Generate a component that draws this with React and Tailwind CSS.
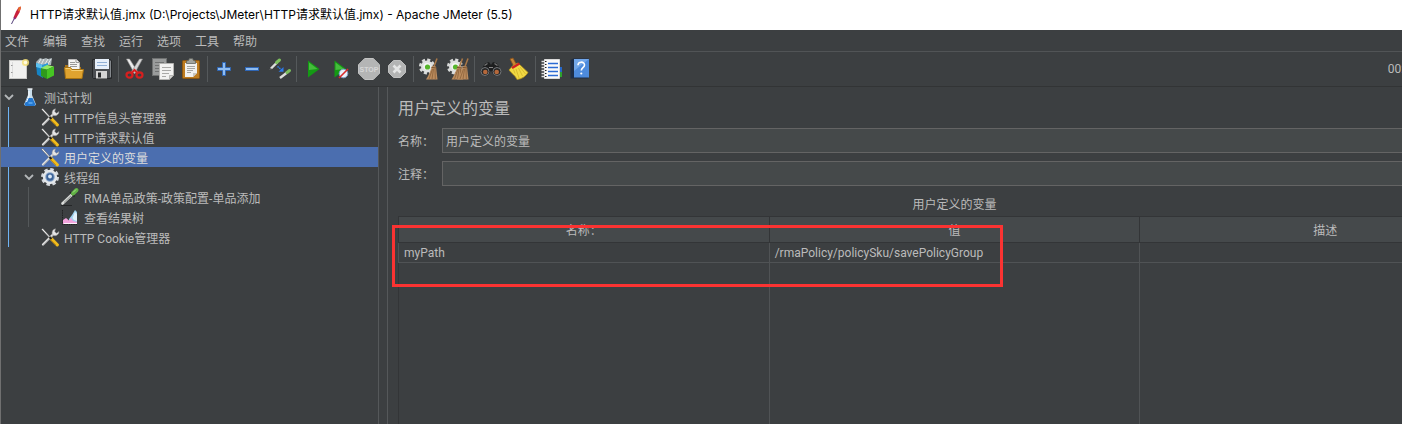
import React from "react";

const Svg = ({ children, size = 24 }) => (
  <svg width={size} height={size} viewBox={`0 0 ${size} ${size}`} fill="none" aria-hidden="true" className="shrink-0">
    {children}
  </svg>
);

const NewIcon = () => (
  <Svg>
    <rect x="3.5" y="3.5" width="17" height="18" fill="#f1f1f0" stroke="#c9c9c7" />
    <path d="M6.5 5v15" stroke="#dcdcdc" />
    <path d="M5 8.500h1.500M5 15.500h1.500" stroke="#999" />
    <circle cx="19.500" cy="5.500" r="3.600" fill="#f6e27a" opacity=".85" />
    <circle cx="19.500" cy="5.500" r="1.800" fill="#fffbe0" />
  </Svg>
);

const TemplatesIcon = () => (
  <Svg>
    <path d="M2 5l4-4 3 1 3-1 2 1 4-1-1 7H3z" fill="#aab4b8" />
    <path d="M4 7l3-5M7 8l3-6M11 7l3-5M14 7l3-5" stroke="#e6eaec" />
    <path d="M2 6l7 2v13l-6-3.500z" fill="#1583c4" />
    <path d="M2 6l7 2v4l-7-2z" fill="#5cc0ee" />
    <path d="M8 8l6-2v4l-6 4z" fill="#2b9ad8" />
    <path d="M7 11l6 1.500V22l-6-3z" fill="#2f9a1c" />
    <path d="M7 11l6-3 7 1.500-7 3z" fill="#93ea62" />
    <path d="M13 12.500l7-3v9L13 22z" fill="#46c523" />
  </Svg>
);

const OpenIcon = () => (
  <Svg>
    <path d="M3 8h6l1 2h9v8H3z" fill="#a8741a" />
    <path d="M6.500 13V2.500h8l3 3V13z" fill="#f4f4f4" stroke="#b9b9b9" />
    <path d="M8 5.500h5M8 7.500h7M8 9.500h7" stroke="#999" />
    <path d="M14 2.500v3h3.500" stroke="#999" />
    <path d="M2.500 10.500h6l1.500 2h11.500L20 21.500H3.500z" fill="#dfa32f" stroke="#a97412" />
    <path d="M3.500 11.500h4.500l1.500 2h11" stroke="#f3cd72" />
  </Svg>
);

const SaveIcon = () => (
  <Svg>
    <path d="M2.500 2.500h18l1 1v18h-18l-1-1z" fill="#4b4e52" stroke="#26282a" />
    <rect x="5" y="2" width="14" height="10" fill="#e6effa" />
    <path d="M7 5.500h10M7 8.500h10" stroke="#91b0d6" />
    <rect x="6" y="14" width="11" height="7.500" fill="#d5d5d5" />
    <rect x="8" y="15.500" width="3" height="5" fill="#26282a" />
    <path d="M20.500 4v16" stroke="#85898d" />
  </Svg>
);

const CutIcon = () => (
  <Svg>
    <path d="M3.500 2l3 0 8 12.500-3 2z" fill="#ececec" stroke="#999" strokeWidth=".6" />
    <path d="M19.500 2l-3 0-8 12.500 3 2z" fill="#d6d6d6" stroke="#8c8c8c" strokeWidth=".6" />
    <ellipse cx="6.500" cy="18" rx="3" ry="2.600" stroke="#d61f1f" strokeWidth="2.200" />
    <ellipse cx="16.500" cy="18" rx="3" ry="2.600" stroke="#d61f1f" strokeWidth="2.200" />
    <path d="M8.500 16l3-3 3 3" stroke="#d61f1f" strokeWidth="2" />
  </Svg>
);

const CopyIcon = () => (
  <Svg>
    <rect x="1.500" y="1.500" width="14" height="17" fill="#9a9c9c" stroke="#6f7171" />
    <path d="M4 5.500h9M4 8.500h5M4 11.500h4M4 14.500h4" stroke="#717373" />
    <path d="M8.500 6.500h14v12l-4 4h-10z" fill="#f2f2f1" stroke="#b4b4b2" />
    <path d="M11 10.500h9M11 13.500h9M11 16.500h7M11 19.500h4" stroke="#a9a9a7" />
    <path d="M18.500 22.500v-4h4z" fill="#d2d2d0" stroke="#a3a3a1" strokeWidth=".7" />
  </Svg>
);

const PasteIcon = () => (
  <Svg>
    <rect x="3.500" y="3.500" width="17" height="18" rx="1" fill="#bd7c20" stroke="#8b5611" />
    <path d="M6 6h12v10l-4 4H6z" fill="#f1f1ef" />
    <path d="M8 9.500h8M8 11.500h8M8 13.500h6M8 15.500h4" stroke="#a5a5a2" />
    <path d="M14 20v-4h4z" fill="#c6c6c2" />
    <path d="M7.500 6.500V4l2-.5 1-2h3l1 2 2 .5v2.500z" fill="#a3a59f" stroke="#62645f" strokeWidth=".8" />
  </Svg>
);

const PlusIcon = () => (
  <Svg>
    <path d="M10.500 5.500h3v5h5v3h-5v5h-3v-5h-5v-3h5z" fill="#8ebcf0" stroke="#2f66b5" />
  </Svg>
);

const MinusIcon = () => (
  <Svg>
    <rect x="5.500" y="10.500" width="13" height="3" fill="#8ebcf0" stroke="#2f66b5" />
  </Svg>
);

const ToggleIcon = () => (
  <Svg>
    <path d="M3 11.500l6-6" stroke="#dcdedc" strokeWidth="2.400" />
    <path d="M8.500 5.500l3-2.500" stroke="#7cbf5d" strokeWidth="3" strokeLinecap="round" />
    <path d="M2 12.500l1.500-1.500" stroke="#888" />
    <path d="M12 21l6.500-5" stroke="#dcdedc" strokeWidth="2.400" />
    <path d="M19 15.500l2.500-2" stroke="#7cbf5d" strokeWidth="3" strokeLinecap="round" />
    <path d="M9.500 9.500l4.500 3.500" stroke="#2c7bea" strokeWidth="1.400" strokeDasharray="1.500 .7" />
    <path d="M15.500 10v4.800h-5z" fill="#2c7bea" />
  </Svg>
);

const PlayIcon = () => (
  <Svg>
    <path d="M7 3.500L18.500 12 7 20.500z" fill="#149a14" />
    <path d="M8 5.500L16.500 12 8 13z" fill="#45bd3c" />
  </Svg>
);

const PlayNoPauseIcon = () => (
  <Svg>
    <path d="M5.500 3.500L17 12 5.500 20.500z" fill="#149a14" />
    <path d="M6.500 5.500L15 12l-8.500 1z" fill="#45bd3c" />
    <circle cx="14.500" cy="16.500" r="4.300" fill="#e9f0fa" stroke="#7f9fc6" />
    <path d="M10 21l9-9" stroke="#d92b2b" strokeWidth="1.600" />
  </Svg>
);

const StopIcon = () => (
  <Svg>
    <path d="M7.700 1.500h8.600l6.200 6.200v8.600l-6.200 6.200H7.700l-6.200-6.200V7.700z" fill="#b4b5b5" stroke="#c2c3c3" />
    <text x="12" y="15" textAnchor="middle" fontSize="7" fontFamily="Liberation Sans, sans-serif" fontWeight="700" fill="#d6d7d7">
      STOP
    </text>
  </Svg>
);

const ShutdownIcon = () => (
  <Svg>
    <path d="M8.500 3.500h7l5 5v7l-5 5h-7l-5-5v-7z" fill="#b3b4b4" stroke="#c0c1c1" />
    <path d="M8.500 8.500l7 7M15.500 8.500l-7 7" stroke="#e4e5e5" strokeWidth="2.600" />
  </Svg>
);

const Gear = () => (
  <>
    <circle cx="9" cy="9.500" r="6.700" stroke="#d9dbda" strokeWidth="2.600" strokeDasharray="3.100 2.160" />
    <circle cx="9" cy="9.500" r="6" fill="#dfe1e0" />
    <circle cx="9" cy="9.500" r="3.600" fill="#f4f5f4" />
    <circle cx="9.500" cy="10" r="2.600" fill="#55b52b" />
  </>
);

const SmallBroom = ({ x }) => (
  <g transform={`translate(${x} 0)`}>
    <path d="M17.500 1.500l-3 8" stroke="#a97847" strokeWidth="1.600" />
    <path d="M12.500 9l4 .5 1.500 13H6.500c2.500-4 4.500-8 6-13.500z" fill="#bb8c5e" />
    <path d="M13 12L9.500 22M14 12l-1.500 10M15.500 12l.3 10" stroke="#8c6139" strokeWidth=".8" />
    <path d="M12 10.500l5 .5" stroke="#76502c" />
  </g>
);

const ClearIcon = () => (
  <Svg>
    <Gear />
    <SmallBroom x={1.5} />
  </Svg>
);

const ClearAllIcon = () => (
  <Svg>
    <Gear />
    <SmallBroom x={-1} />
    <SmallBroom x={4.5} />
  </Svg>
);

const SearchIcon = () => (
  <Svg>
    <path d="M6 6.500L10 5l2 3 2-3 4 1.500 4 7-3 5h-4l-3-5-3 5H5l-3.500-5z" fill="#1d1e1f" />
    <path d="M5.500 8.500l3-2M18.500 8.500l-3-2" stroke="#777" strokeWidth="1.300" />
    <circle cx="6" cy="14.500" r="4" fill="#252627" stroke="#74777a" />
    <circle cx="18" cy="14.500" r="4" fill="#252627" stroke="#74777a" />
    <circle cx="6.300" cy="15" r="2.300" fill="#b5683b" />
    <circle cx="17.700" cy="15" r="2.300" fill="#b5683b" />
    <path d="M10 10.500h4" stroke="#888" />
  </Svg>
);

const BroomIcon = () => (
  <Svg>
    <path d="M3 2l3-1L9.500 7.500 6.500 9z" fill="#c98538" stroke="#85501a" strokeWidth=".8" />
    <path d="M6 8.500L11 6l10 9.500c-2.500 4-6 6.500-11 7C8.500 18.500 4 16 2 13z" fill="#f1d943" stroke="#b7941a" strokeWidth=".8" />
    <path d="M9 12l3 9M11.500 11l4 8M13 10l5.500 7M6.500 12.500l1.500 4" stroke="#d3b42a" strokeWidth=".8" />
    <path d="M5 11l7.500-4.500" stroke="#d12222" strokeWidth="2.500" />
  </Svg>
);

const LogIcon = () => (
  <Svg>
    <path d="M19 10h3v5h-3z" fill="#2567c9" />
    <path d="M19 15h3v5h-3z" fill="#2da22d" />
    <path d="M4.500 2.500h15v19h-15z" fill="#fafafa" stroke="#dadada" />
    <path d="M8 6.500h10M8 10.500h10M8 14.500h10M8 18.500h10" stroke="#2c6bd4" strokeWidth="1.300" />
    <path d="M1.500 4.500h4M1.500 7.500h4M1.500 10.500h4M1.500 13.500h4M1.500 16.500h4M1.500 19.500h4" stroke="#e4e4e4" strokeWidth="1.400" />
    <path d="M5 4.500h1.500M5 7.500h1.500M5 10.500h1.500M5 13.500h1.500M5 16.500h1.500M5 19.500h1.500" stroke="#222" />
  </Svg>
);

const HelpIcon = () => (
  <Svg>
    <path d="M2.500 3l3-1.500h15v20h-18z" fill="#1d2d47" />
    <rect x="6" y="2" width="15" height="18.500" fill="#4d8bdd" />
    <path d="M6 2h15L6 14z" fill="#72a7ea" />
    <path d="M10 8.300c0-4.200 6.500-4 6.500-.4 0 2.800-3.200 2.700-3.200 5.600" stroke="#fff" strokeWidth="1.600" />
    <circle cx="13.300" cy="16.500" r="1.100" fill="#fff" />
  </Svg>
);

const FeatherIcon = () => (
  <Svg size={20}>
    <path d="M12.500 2.500l2-1 .5 1-1.500 5-3.500 6-2 .5-.5-1.500 2.500-6z" fill="#c9203c" />
    <path d="M12.500 2.500l2-1 .5 1-1 3-2 1z" fill="#e8702a" />
    <path d="M8 12l2 1-1 1.500-1.500-.5z" fill="#7a2a86" />
    <path d="M8 14l-2.500 5" stroke="#54407a" />
  </Svg>
);

const FlaskIcon = () => (
  <Svg size={20}>
    <path d="M8 2h4v6l4 9.500-1.500 1.500h-9L4 17.500 8 8z" fill="#c9ddea" />
    <path d="M7.500 11h5l3 6.500-1 1.500h-9L4.500 17.500z" fill="#2478d0" />
    <path d="M7.500 2h5" stroke="#e8eef2" strokeWidth="1.500" />
    <path d="M9 4v5l-2.500 6" stroke="#fff" />
    <path d="M8.500 16h4" stroke="#63aef0" strokeWidth="1.500" />
  </Svg>
);

const ToolsIcon = () => (
  <Svg size={20}>
    <path d="M3 17.500L14 6.500" stroke="#e4e4e4" strokeWidth="2.200" strokeLinecap="round" />
    <path d="M3.500 18L13.500 8" stroke="#8b8d8e" strokeWidth=".8" />
    <path d="M15.500 1.800a4 4 0 0 0-3.300 5l1.600 1.700a4 4 0 0 0 5.200-4l-2.500 1.700-1.800-1.600z" fill="#e5e5e5" stroke="#8c8c8c" strokeWidth=".5" />
    <path d="M1.500 2.500l1.300-1 8 9-1 .8z" fill="#f0f0f0" stroke="#555" strokeWidth=".5" />
    <path d="M11.500 12l5.800 5.800" stroke="#f0bc1c" strokeWidth="3.200" strokeLinecap="round" />
    <path d="M11 13l5 5" stroke="#c58a0d" strokeWidth=".9" />
    <path d="M9.500 10l2 2" stroke="#222" strokeWidth="2" />
  </Svg>
);

const CogIcon = () => (
  <Svg size={20}>
    <circle cx="10" cy="10" r="7.500" stroke="#d5d9de" strokeWidth="3" strokeDasharray="3.400 2.490" />
    <circle cx="10" cy="10" r="6" fill="#8aa6c9" stroke="#e4e7ea" strokeWidth="2.400" />
    <circle cx="10" cy="10" r="3.700" fill="#3c6398" />
    <circle cx="10" cy="9.500" r="1.900" fill="#dbe8f6" />
  </Svg>
);

const DropperIcon = () => (
  <Svg size={20}>
    <path d="M1 18.500h11" stroke="#242627" />
    <path d="M2.500 16.500L12 7.500" stroke="#d9dbd9" strokeWidth="2.600" strokeLinecap="round" />
    <path d="M4 15.500l7-6.700" stroke="#8c908c" />
    <path d="M10 5l4.500 4.500" stroke="#222" strokeWidth="1.600" />
    <path d="M13 6.500L16.500 3" stroke="#61b245" strokeWidth="4" strokeLinecap="round" />
    <path d="M13 5.500L16 2.500" stroke="#a9df8e" />
  </Svg>
);

const ResultsIcon = () => (
  <Svg size={20}>
    <path d="M9 12l3-4 3-5 2 2v12H9z" fill="#9fd0ef" />
    <path d="M3 17v-4l3-2 3 2.500 2-2.500 2 3 4 1v2z" fill="#f2a3dc" />
    <path d="M12.500 11l2.500-6 2 2v7l-3-1z" fill="#e3f1fb" />
    <path d="M2.500 3v14.500H17" stroke="#202122" strokeDasharray="1.500 .8" />
    <path d="M4 16.500h13" stroke="#fdf1fa" />
  </Svg>
);

const Chevron = () => (
  <Svg size={16}>
    <path d="M4 6l4 4 4-4" stroke="#b4b7b9" strokeWidth="1.800" />
  </Svg>
);

const menus = ["文件", "编辑", "查找", "运行", "选项", "工具", "帮助"];

const tools = [
  [["新建", NewIcon], ["模板", TemplatesIcon], ["打开", OpenIcon], ["保存", SaveIcon]],
  [["剪切", CutIcon], ["复制", CopyIcon], ["粘贴", PasteIcon]],
  [["展开", PlusIcon], ["折叠", MinusIcon], ["切换", ToggleIcon]],
  [["启动", PlayIcon], ["不停顿开始", PlayNoPauseIcon], ["停止", StopIcon], ["关闭", ShutdownIcon]],
  [["清除", ClearIcon], ["清除全部", ClearAllIcon]],
  [["搜索", SearchIcon], ["重置搜索", BroomIcon]],
  [["函数助手", LogIcon], ["帮助", HelpIcon]],
];

const tree = {
  label: "测试计划",
  Icon: FlaskIcon,
  children: [
    { label: "HTTP信息头管理器", Icon: ToolsIcon },
    { label: "HTTP请求默认值", Icon: ToolsIcon },
    { label: "用户定义的变量", Icon: ToolsIcon, selected: true },
    {
      label: "线程组",
      Icon: CogIcon,
      children: [
        { label: "RMA单品政策-政策配置-单品添加", Icon: DropperIcon },
        { label: "查看结果树", Icon: ResultsIcon },
      ],
    },
    { label: "HTTP Cookie管理器", Icon: ToolsIcon },
  ],
};

const indents = ["pl-0", "pl-5", "pl-10"];
const guides = ["left-[7px] bg-[#6fb4f5]", "left-[27px] bg-[#54585a]"];

function TreeNode({ node, level = 0 }) {
  const { label, Icon, children, selected } = node;
  return (
    <li role="treeitem" aria-selected={!!selected} aria-expanded={children ? true : undefined}>
      <button
        type="button"
        className={`relative flex h-5 w-full items-center whitespace-nowrap text-left ${indents[level]} ${
          selected ? "bg-[#4b6eaf] text-[#dddddd]" : ""
        }`}
      >
        <span className="mr-[3px] w-4 shrink-0">{children && <Chevron />}</span>
        <Icon />
        <span className="ml-1 pt-[3px]">{label}</span>
      </button>
      {children && (
        <ul role="group" className="relative">
          <span className={`absolute inset-y-0 w-px ${guides[level]}`} />
          {children.map((child) => (
            <TreeNode key={child.label} node={child} level={level + 1} />
          ))}
        </ul>
      )}
    </li>
  );
}

function Field({ id, label, value }) {
  return (
    <div className="flex items-center">
      <label htmlFor={id} className="w-11 shrink-0 pt-0.5">
        {label}
      </label>
      <input
        id={id}
        defaultValue={value}
        className="h-[25px] min-w-0 flex-1 border border-[#646464] bg-[#45494a] px-[3px] outline-none"
      />
    </div>
  );
}

const columns = ["名称：", "值", "描述"];
const rows = [["myPath", "/rmaPolicy/policySku/savePolicyGroup", ""]];

export default function App() {
  return (
    <div className="flex h-screen flex-col overflow-hidden border-l border-[#707070] bg-[#3c3f41] font-[Roboto,'Noto_Sans_CJK_SC',sans-serif] text-[12px] leading-4 text-[#bbbbbb]">
      <header className="flex h-[30px] shrink-0 items-center gap-[13px] bg-white pl-[5px] font-[Inter,'Noto_Sans_CJK_SC',sans-serif] text-black">
        <div className="w-[11px]">
          <FeatherIcon />
        </div>
        <h1 className="whitespace-nowrap">HTTP请求默认值.jmx (D:\Projects\JMeter\HTTP请求默认值.jmx) - Apache JMeter (5.5)</h1>
      </header>

      <nav className="flex h-[22px] shrink-0 items-center gap-[14px] border-b border-[#515456] pl-1 pt-0.5">
        {menus.map((m) => (
          <button key={m} type="button">
            {m}
          </button>
        ))}
      </nav>

      <div role="toolbar" className="flex h-[35px] shrink-0 items-center overflow-hidden border-b border-[#323435] pl-[3px]">
        {tools.map((group, i) => (
          <React.Fragment key={i}>
            {i > 0 && <span className="mx-0.5 h-[26px] w-px bg-[#55595b]" />}
            {group.map(([name, Icon]) => (
              <button key={name} type="button" aria-label={name} className="flex w-7 shrink-0 justify-center">
                <Icon />
              </button>
            ))}
          </React.Fragment>
        ))}
        <span className="-mr-8 ml-auto whitespace-nowrap">00:00:00</span>
      </div>

      <div className="flex min-h-0 flex-1">
        <aside className="w-[378px] shrink-0 border-r border-[#55585a]">
          <ul role="tree">
            <TreeNode node={tree} />
          </ul>
        </aside>

        <main className="ml-2 flex min-w-0 flex-1 overflow-hidden border-l border-[#55585a]">
          <div className="-mr-[109px] ml-[10px] flex flex-1 shrink-0 flex-col">
            <h2 className="pt-[10px] text-[16px] leading-6">用户定义的变量</h2>
            <div className="flex flex-col gap-2 pt-[7px]">
              <Field id="name" label="名称：" value="用户定义的变量" />
              <Field id="comments" label="注释：" value="" />
            </div>

            <div className="relative mt-[9px] flex flex-1 flex-col">
              <table className="w-full table-fixed border-collapse">
                <caption className="h-[21px] pb-[3px] pt-0.5">用户定义的变量</caption>
                <thead>
                  <tr className="h-[26px] bg-[#45494b]">
                    {columns.map((c) => (
                      <th key={c} scope="col" className="border border-[#333537] px-0 pb-0 pt-[3px] text-center font-normal">
                        {c}
                      </th>
                    ))}
                  </tr>
                </thead>
                <tbody>
                  {rows.map((r) => (
                    <tr key={r[0]} className="h-5">
                      {r.map((v, i) => (
                        <td key={i} className="border-x border-b border-[#505355] px-[5px] py-0">
                          {v}
                        </td>
                      ))}
                    </tr>
                  ))}
                </tbody>
              </table>
              <div className="grid flex-1 grid-cols-3 divide-x divide-[#505355] border-l border-[#333537]">
                <span />
                <span />
                <span />
              </div>
              <div className="pointer-events-none absolute -left-[6px] top-[30px] h-[62px] w-[611px] border-3 border-[#fb3332]" />
            </div>
          </div>
        </main>
      </div>
    </div>
  );
}
